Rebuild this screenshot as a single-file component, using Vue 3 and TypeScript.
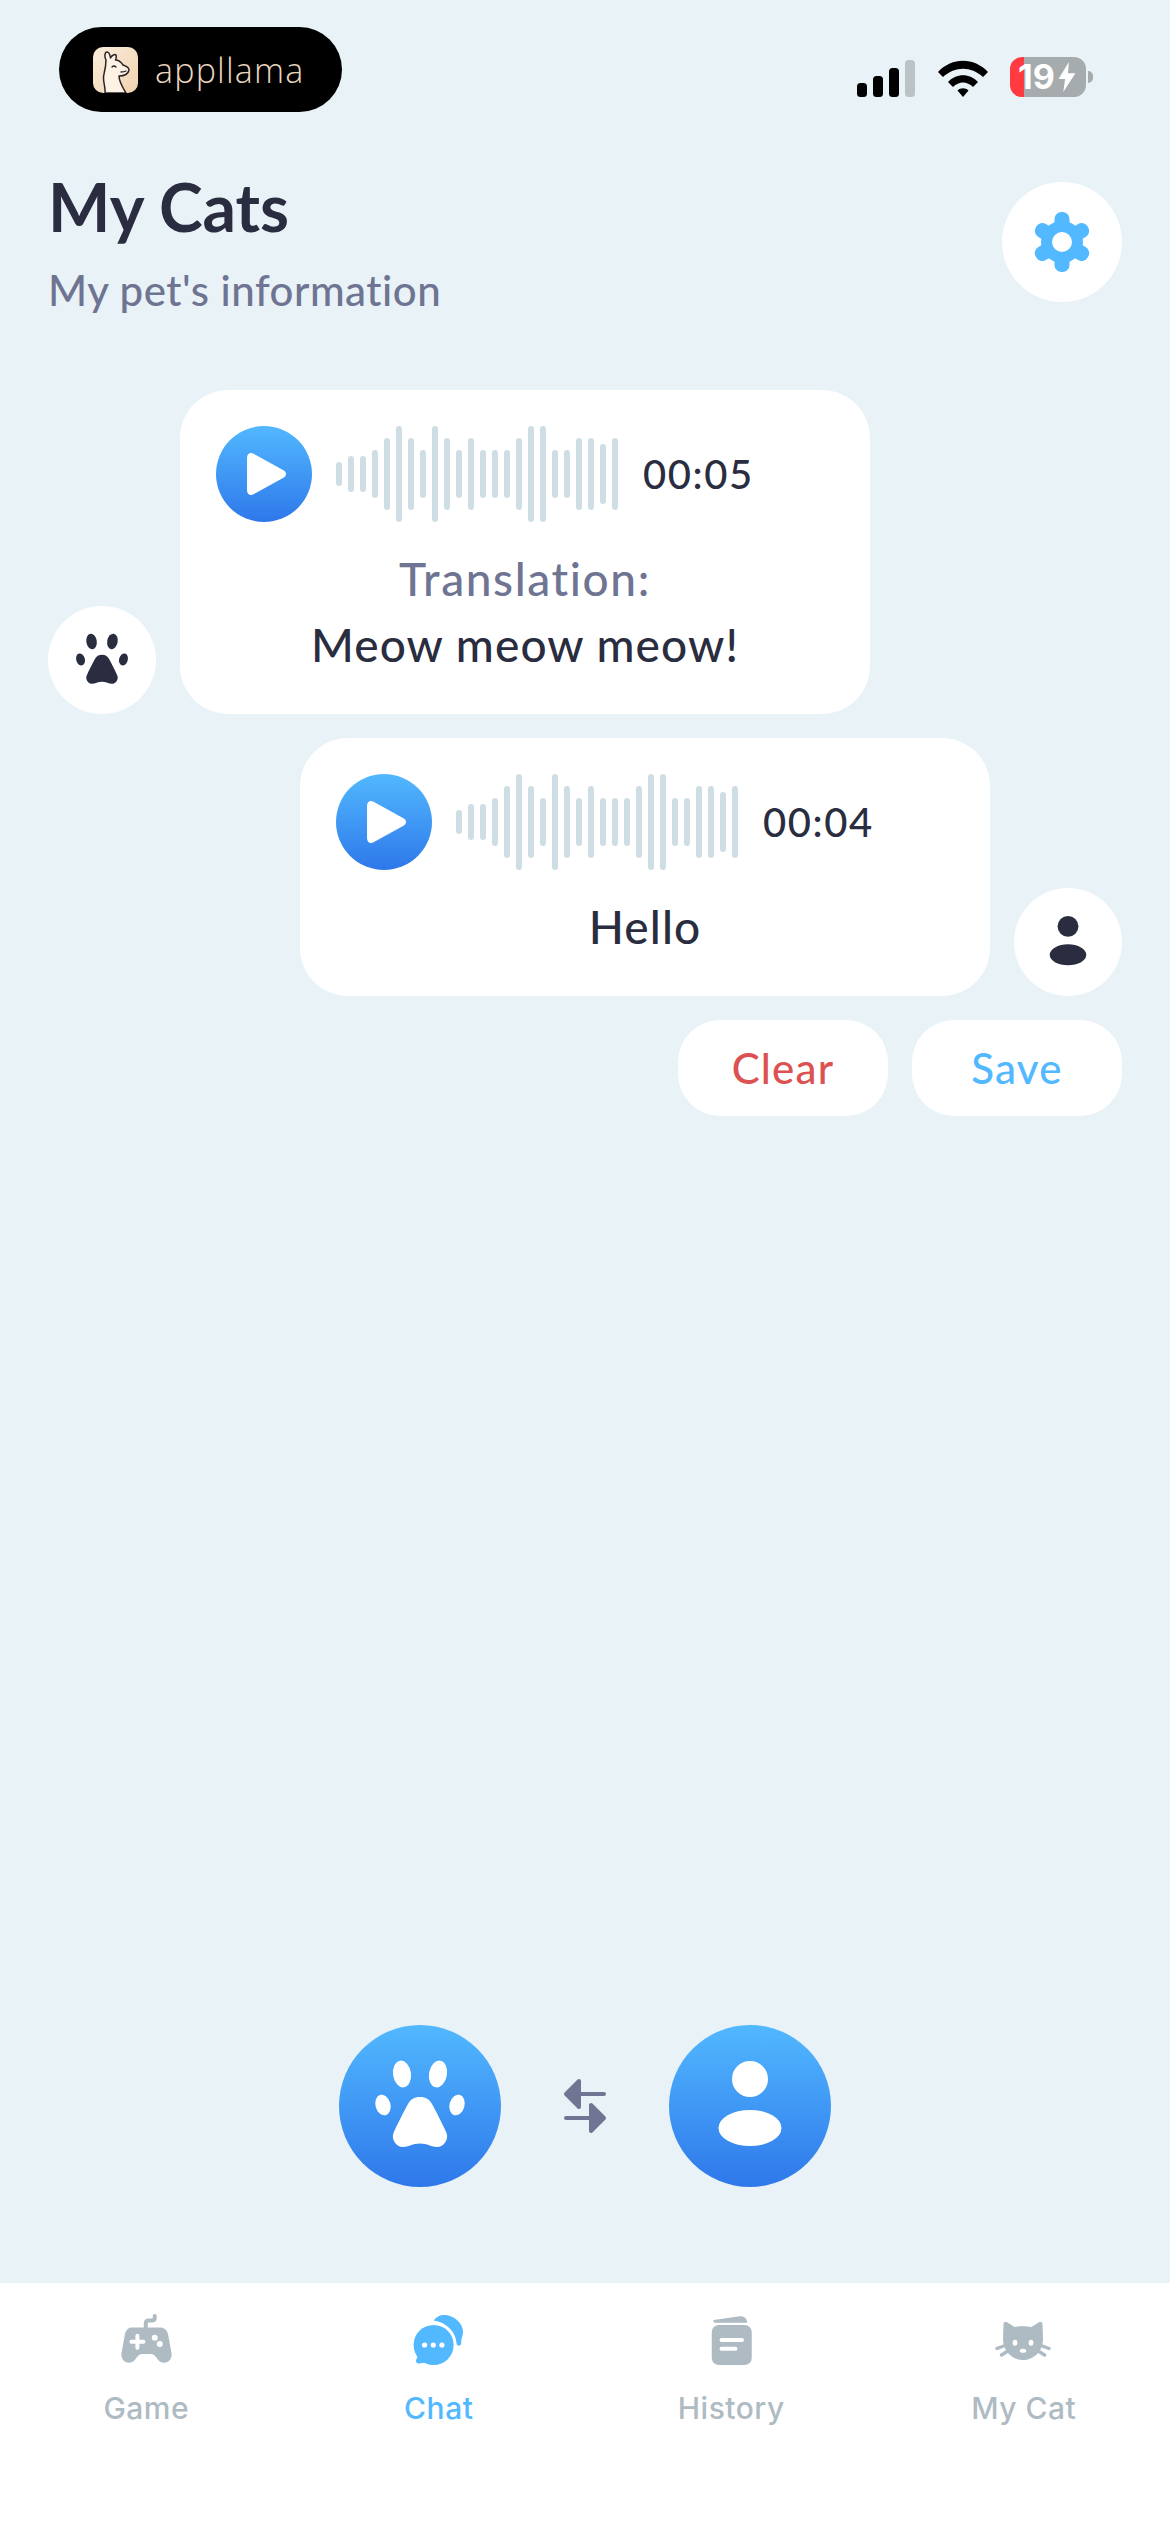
<script setup lang="ts">
const bars: number[] = [24, 36, 36, 48, 72, 96, 72, 48, 96, 72, 48, 72, 48, 48, 48, 72, 96, 96, 48, 48, 72, 72, 60, 72]
const teeth: number[] = [0, 60, 120, 180, 240, 300]
const tabs = ['Game', 'Chat', 'History', 'My Cat']
</script>

<template>
  <div class="screen">
    <header class="status">
      <div class="brand">
        <svg class="llama" viewBox="0 0 45 46">
          <defs>
            <linearGradient id="tile" x1="0" y1="0" x2="1" y2="1">
              <stop offset="0" stop-color="#fbeedd" />
              <stop offset="1" stop-color="#f0d2ae" />
            </linearGradient>
          </defs>
          <rect width="45" height="46" rx="10" fill="url(#tile)" />
          <path d="M12 46 C13 40 9 34 11 27 C12 23 13 17 13 13 C11 9 12 5 14 5 C16 5 17 8 17.5 11 C19 8 22 7 23 8 C23.5 10 23 12 22.5 13 C25 13 28 15 30 18 C33 19 36 20 36 23 C35 28 30 29 26 29 C26 35 30 41 33 46 Z" fill="#fdf2e4" stroke="#2a2526" stroke-width="1.5" stroke-linejoin="round" />
          <path d="M19 20 Q21 18 23 20 M28 25 Q31 25 33 24" fill="none" stroke="#2a2526" stroke-width="1.3" stroke-linecap="round" />
        </svg>
        <span class="brand-name">appllama</span>
      </div>
      <div class="indicators">
        <div class="signal">
          <i class="s1"></i><i class="s2"></i><i class="s3"></i><i class="s4"></i>
        </div>
        <svg class="wifi" viewBox="0 0 50 37">
          <path d="M0 12 C14 -3 36 -3 50 12 L45 17 C33 6 17 6 5 17 Z" />
          <path d="M10 22 C18 13 32 13 40 22 L35 27 C29 21 21 21 15 27 Z" />
          <path d="M19.5 30.5 C22.5 27.5 27.5 27.5 30.5 30.5 L25 37 Z" />
        </svg>
        <div class="battery">
          <div class="cell">
            <span class="level">19</span>
            <svg class="bolt" viewBox="0 0 18 32"><path d="M11 0 L0 18 H7 L5 32 L18 12 H10 Z" /></svg>
          </div>
          <i class="nub"></i>
        </div>
      </div>
    </header>

    <section class="heading">
      <div class="titles">
        <h1>My Cats</h1>
        <p>My pet's information</p>
      </div>
      <button class="gear">
        <svg viewBox="0 0 60 60" width="60" height="60">
          <circle cx="30" cy="30" r="21" fill="#52b8ff" />
          <rect v-for="a in teeth" :key="a" x="22.5" y="0" width="15" height="18" rx="7" fill="#52b8ff" :transform="`rotate(${a} 30 30)`" />
          <circle cx="30" cy="30" r="10" fill="#fff" />
        </svg>
      </button>
    </section>

    <main class="chat">
      <div class="row">
        <div class="avatar">
          <svg viewBox="0 0 162 162" width="94" height="94" fill="#2a2c40">
            <ellipse cx="63" cy="49" rx="9" ry="13.5" transform="rotate(-8 63 49)" />
            <ellipse cx="99" cy="49" rx="9" ry="13.5" transform="rotate(10 99 49)" />
            <ellipse cx="44" cy="80" rx="7.5" ry="10.5" transform="rotate(-15 44 80)" />
            <ellipse cx="118" cy="80" rx="7.5" ry="10.5" transform="rotate(15 118 80)" />
            <path d="M81 72 C75 72 72 74 69 79 C64 88 58 100 54.5 108 C52 114 57 122 64 122 C69 122 74 118.5 81 118.5 C88 118.5 93 122 98 122 C105 122 110 114 107.5 108 C104 100 98 88 93 79 C90 74 87 72 81 72 Z" />
          </svg>
        </div>
        <div class="bubble">
          <div class="voice">
            <div class="play">
              <svg viewBox="0 0 40 42" width="40" height="42"><path d="M0 5 C0 0 4 -1 7 1 L36 17 C40 19 40 23 36 25 L7 41 C4 43 0 42 0 37 Z" fill="#fff" /></svg>
            </div>
            <div class="wave"><i v-for="(h, i) in bars" :key="i" :style="{ height: h + 'px' }"></i></div>
            <span class="time">00:05</span>
          </div>
          <p class="label">Translation:</p>
          <p class="msg">Meow meow meow!</p>
        </div>
      </div>

      <div class="row mine">
        <div class="bubble">
          <div class="voice">
            <div class="play">
              <svg viewBox="0 0 40 42" width="40" height="42"><path d="M0 5 C0 0 4 -1 7 1 L36 17 C40 19 40 23 36 25 L7 41 C4 43 0 42 0 37 Z" fill="#fff" /></svg>
            </div>
            <div class="wave"><i v-for="(h, i) in bars" :key="i" :style="{ height: h + 'px' }"></i></div>
            <span class="time">00:04</span>
          </div>
          <p class="msg">Hello</p>
        </div>
        <div class="avatar">
          <svg viewBox="0 0 162 162" width="94" height="94" fill="#2a2c40">
            <circle cx="81" cy="54" r="18" />
            <ellipse cx="81" cy="103" rx="31.5" ry="18" />
          </svg>
        </div>
      </div>

      <div class="actions">
        <button class="pill clear">Clear</button>
        <button class="pill save">Save</button>
      </div>
    </main>

    <section class="record">
      <button class="mic">
        <svg viewBox="0 0 162 162" width="162" height="162" fill="#fff">
          <ellipse cx="63" cy="49" rx="9" ry="13.5" transform="rotate(-8 63 49)" />
          <ellipse cx="99" cy="49" rx="9" ry="13.5" transform="rotate(10 99 49)" />
          <ellipse cx="44" cy="80" rx="7.5" ry="10.5" transform="rotate(-15 44 80)" />
          <ellipse cx="118" cy="80" rx="7.5" ry="10.5" transform="rotate(15 118 80)" />
          <path d="M81 72 C75 72 72 74 69 79 C64 88 58 100 54.5 108 C52 114 57 122 64 122 C69 122 74 118.5 81 118.5 C88 118.5 93 122 98 122 C105 122 110 114 107.5 108 C104 100 98 88 93 79 C90 74 87 72 81 72 Z" />
        </svg>
      </button>
      <svg class="swap" viewBox="0 0 72 72" width="72" height="72">
        <path d="M17 24 L30 11 V37 Z M30 24 H55" fill="#6f7592" stroke="#6f7592" stroke-width="4" stroke-linejoin="round" stroke-linecap="round" />
        <path d="M55 48 L42 35 V61 Z M42 48 H17" fill="#6f7592" stroke="#6f7592" stroke-width="4" stroke-linejoin="round" stroke-linecap="round" />
      </svg>
      <button class="mic">
        <svg viewBox="0 0 162 162" width="162" height="162" fill="#fff">
          <circle cx="81" cy="54" r="18" />
          <ellipse cx="81" cy="103" rx="31.5" ry="18" />
        </svg>
      </button>
    </section>

    <nav class="tabs">
      <div class="tab">
        <svg viewBox="0 0 60 60" width="60" height="60">
          <path d="M29.75 18 V13.5 C29.75 11.5 31 10.5 33 10.5 H36 C38 10.5 38.75 9.5 38.75 7.5 V6" fill="none" stroke="#aebbc3" stroke-width="4" stroke-linecap="round" />
          <path d="M16 17.5 H44 C48 17.5 51 20 52 24 L55.5 43 C56.5 48 53 52.7 48 52.7 C44 52.7 42 50 40 47 C39 45.5 37 44 35 44 H26 C24 44 22 45.5 21 47 C19 50 17 52.7 13 52.7 C8 52.7 4.5 48 5.5 43 L9 24 C10 20 12 17.5 16 17.5 Z" fill="#aebbc3" />
          <path d="M15.4 31.7 H27.4 M21.4 25.7 V37.7" stroke="#fff" stroke-width="4" stroke-linecap="round" />
          <circle cx="38.75" cy="27.7" r="3" fill="#fff" />
          <circle cx="43.75" cy="34" r="3" fill="#fff" />
        </svg>
        <span>{{ tabs[0] }}</span>
      </div>
      <div class="tab active">
        <svg viewBox="0 0 60 60" width="60" height="60" fill="#52b8ff">
          <path d="M24.6 10.5 C27 7 31 5 35 5 C45 5 54 13 54 22 C54 25 53 27 52.5 29 C52 31 53 34 51 35.5 C49 36 47.5 35 47.5 33 C47 22 37 12 24.6 10.5 Z" />
          <circle cx="24.6" cy="35" r="20" />
          <path d="M8 42 C9 45 9 47 7.5 49 C6.5 51 7 53.5 10 53.5 C13 53.5 15 52.5 18 52.5 L14 44 Z" />
          <circle cx="15.6" cy="35" r="2.6" fill="#fff" />
          <circle cx="24.25" cy="35" r="2.6" fill="#fff" />
          <circle cx="32.9" cy="35" r="2.6" fill="#fff" />
        </svg>
        <span>{{ tabs[1] }}</span>
      </div>
      <div class="tab">
        <svg viewBox="0 0 60 60" width="60" height="60" fill="#aebbc3">
          <path d="M12.5 10 L39 6.2 C43 5.8 46 8.5 46.3 12.7 H14 C13 12.7 12 11 12.5 10 Z" />
          <rect x="10.75" y="15" width="40" height="40" rx="7" />
          <path d="M20.5 30 H41 M20.5 38.7 H34.5" stroke="#fff" stroke-width="4" stroke-linecap="round" />
        </svg>
        <span>{{ tabs[2] }}</span>
      </div>
      <div class="tab">
        <svg viewBox="0 0 60 60" width="60" height="60" fill="#aebbc3">
          <path d="M9.5 14 C9.5 12 11.5 11.5 13.5 12.5 L20.5 17 C25 16 33 16 37.5 17 L44.5 12.5 C46.5 11.5 48.5 12 48.5 14 L49 29 C49 42 39 50 29 50 C19 50 9 42 9 29 Z" />
          <path d="M3 38.5 L11 35.5 M7.5 45 L13 41.5 M55 38.5 L47 35.5 M50.5 45 L45 41.5" stroke="#aebbc3" stroke-width="3.4" stroke-linecap="round" />
          <ellipse cx="21" cy="32.7" rx="2.4" ry="3" fill="#fff" />
          <ellipse cx="37" cy="32.7" rx="2.4" ry="3" fill="#fff" />
          <ellipse cx="29" cy="40.7" rx="3.2" ry="2" fill="#fff" />
        </svg>
        <span>{{ tabs[3] }}</span>
      </div>
    </nav>
  </div>
</template>

<style scoped>
.screen {
  width: 1170px;
  height: 2532px;
  display: flex;
  flex-direction: column;
  background: #e8f2f7;
  font-family: "Lato", "Inter", sans-serif;
  font-weight: 500;
  color: #2a2c40;
  overflow: hidden;
}
.status {
  height: 182px;
  box-sizing: border-box;
  padding: 27px 48px 0 59px;
  display: flex;
  justify-content: space-between;
  align-items: flex-start;
  flex: none;
}
.brand {
  width: 283px;
  height: 85px;
  box-sizing: border-box;
  padding-left: 34px;
  border-radius: 43px;
  background: #000;
  display: flex;
  align-items: center;
  gap: 17px;
}
.llama {
  width: 45px;
  height: 46px;
}
.brand-name {
  color: #e9d6bf;
  font-family: "Open Sans", sans-serif;
  font-weight: 300;
  font-size: 34px;
  letter-spacing: 1.2px;
  line-height: 40px;
}
.indicators {
  margin-top: 30px;
  margin-right: 29px;
  display: flex;
  align-items: center;
}
.signal {
  display: flex;
  align-items: flex-end;
  gap: 6px;
  height: 37px;
  margin-top: 2px;
}
.signal i {
  width: 10px;
  border-radius: 3.5px;
  background: #000;
}
.s1 { height: 14px; }
.s2 { height: 21px; }
.s3 { height: 29px; }
.s4 { height: 37px; background: #bac3c6 !important; }
.wifi {
  width: 50px;
  height: 37px;
  margin-left: 23px;
  margin-top: 2px;
  fill: #000;
}
.battery {
  display: flex;
  align-items: center;
  margin-left: 22px;
}
.cell {
  width: 76px;
  height: 40px;
  box-sizing: border-box;
  padding-left: 8px;
  border-radius: 12px;
  background: linear-gradient(90deg, #ff3b41 14px, #a6abae 14px);
  display: flex;
  align-items: center;
  gap: 3px;
}
.level {
  color: #fff;
  font-family: "Inter", sans-serif;
  font-weight: 700;
  font-size: 34px;
  line-height: 40px;
}
.bolt {
  width: 18px;
  height: 30px;
  fill: #fff;
}
.nub {
  width: 5px;
  height: 12px;
  margin-left: 2px;
  border-radius: 0 6px 6px 0;
  background: #a6abae;
}
.heading {
  height: 120px;
  padding: 0 48px;
  display: flex;
  justify-content: space-between;
  flex: none;
}
.titles {
  margin-top: -14px;
}
h1 {
  margin: 0;
  font-size: 66px;
  line-height: 78px;
  font-weight: 700;
}
.heading p {
  margin: 18px 0 0;
  font-size: 42px;
  line-height: 52px;
  letter-spacing: 0.5px;
  color: #6e7491;
}
.gear {
  width: 120px;
  height: 120px;
  padding: 0;
  border: 0;
  border-radius: 50%;
  background: #fff;
  display: flex;
  align-items: center;
  justify-content: center;
}
.chat {
  margin-top: 88px;
  padding: 0 48px;
  display: flex;
  flex-direction: column;
  gap: 24px;
  flex: 1;
}
.row {
  display: flex;
  align-items: flex-end;
  gap: 24px;
}
.mine {
  justify-content: flex-end;
}
.avatar {
  width: 108px;
  height: 108px;
  border-radius: 50%;
  background: #fff;
  display: flex;
  align-items: center;
  justify-content: center;
  flex: none;
}
.bubble {
  width: 690px;
  box-sizing: border-box;
  padding: 36px;
  border-radius: 48px;
  background: #fff;
  text-align: center;
}
.voice {
  display: flex;
  align-items: center;
}
.play {
  width: 96px;
  height: 96px;
  padding-left: 6px;
  box-sizing: border-box;
  border-radius: 50%;
  background: linear-gradient(180deg, #52b8ff, #2e78ea);
  display: flex;
  align-items: center;
  justify-content: center;
  flex: none;
}
.wave {
  margin-left: 24px;
  display: flex;
  align-items: center;
  gap: 6px;
}
.wave i {
  width: 6px;
  border-radius: 3px;
  background: #cfdee5;
}
.time {
  margin-left: 25px;
  font-size: 40px;
  line-height: 48px;
  letter-spacing: 1.6px;
}
.label,
.msg {
  margin: 0;
  font-size: 46px;
  line-height: 66px;
  letter-spacing: 1.1px;
}
.label {
  margin-top: 24px;
  letter-spacing: 1.6px;
  color: #6e7491;
}
.voice + .msg {
  margin-top: 24px;
}
.actions {
  display: flex;
  justify-content: flex-end;
  gap: 24px;
}
.pill {
  width: 210px;
  height: 96px;
  padding: 0;
  border: 0;
  border-radius: 42px;
  background: #fff;
  font-family: inherit;
  font-weight: 500;
  font-size: 42px;
  letter-spacing: 1.2px;
}
.clear { color: #dc5252; }
.save { color: #52b8ff; }
.record {
  display: flex;
  justify-content: center;
  align-items: center;
  gap: 48px;
  margin-bottom: 96px;
  flex: none;
}
.mic {
  width: 162px;
  height: 162px;
  padding: 0;
  border: 0;
  border-radius: 50%;
  background: linear-gradient(180deg, #52b8ff, #2e78ea);
  display: block;
}
.mic svg { display: block; }
.tabs {
  height: 249px;
  box-sizing: border-box;
  padding-top: 27px;
  background: #fff;
  display: grid;
  grid-template-columns: repeat(4, 1fr);
  align-items: start;
  flex: none;
}
.tab {
  display: flex;
  flex-direction: column;
  align-items: center;
  gap: 20px;
  color: #aebbc3;
  font-family: "Inter", sans-serif;
  font-weight: 500;
  font-size: 30px;
  line-height: 36px;
  letter-spacing: 0.5px;
}
.active { color: #52b8ff; }
</style>
